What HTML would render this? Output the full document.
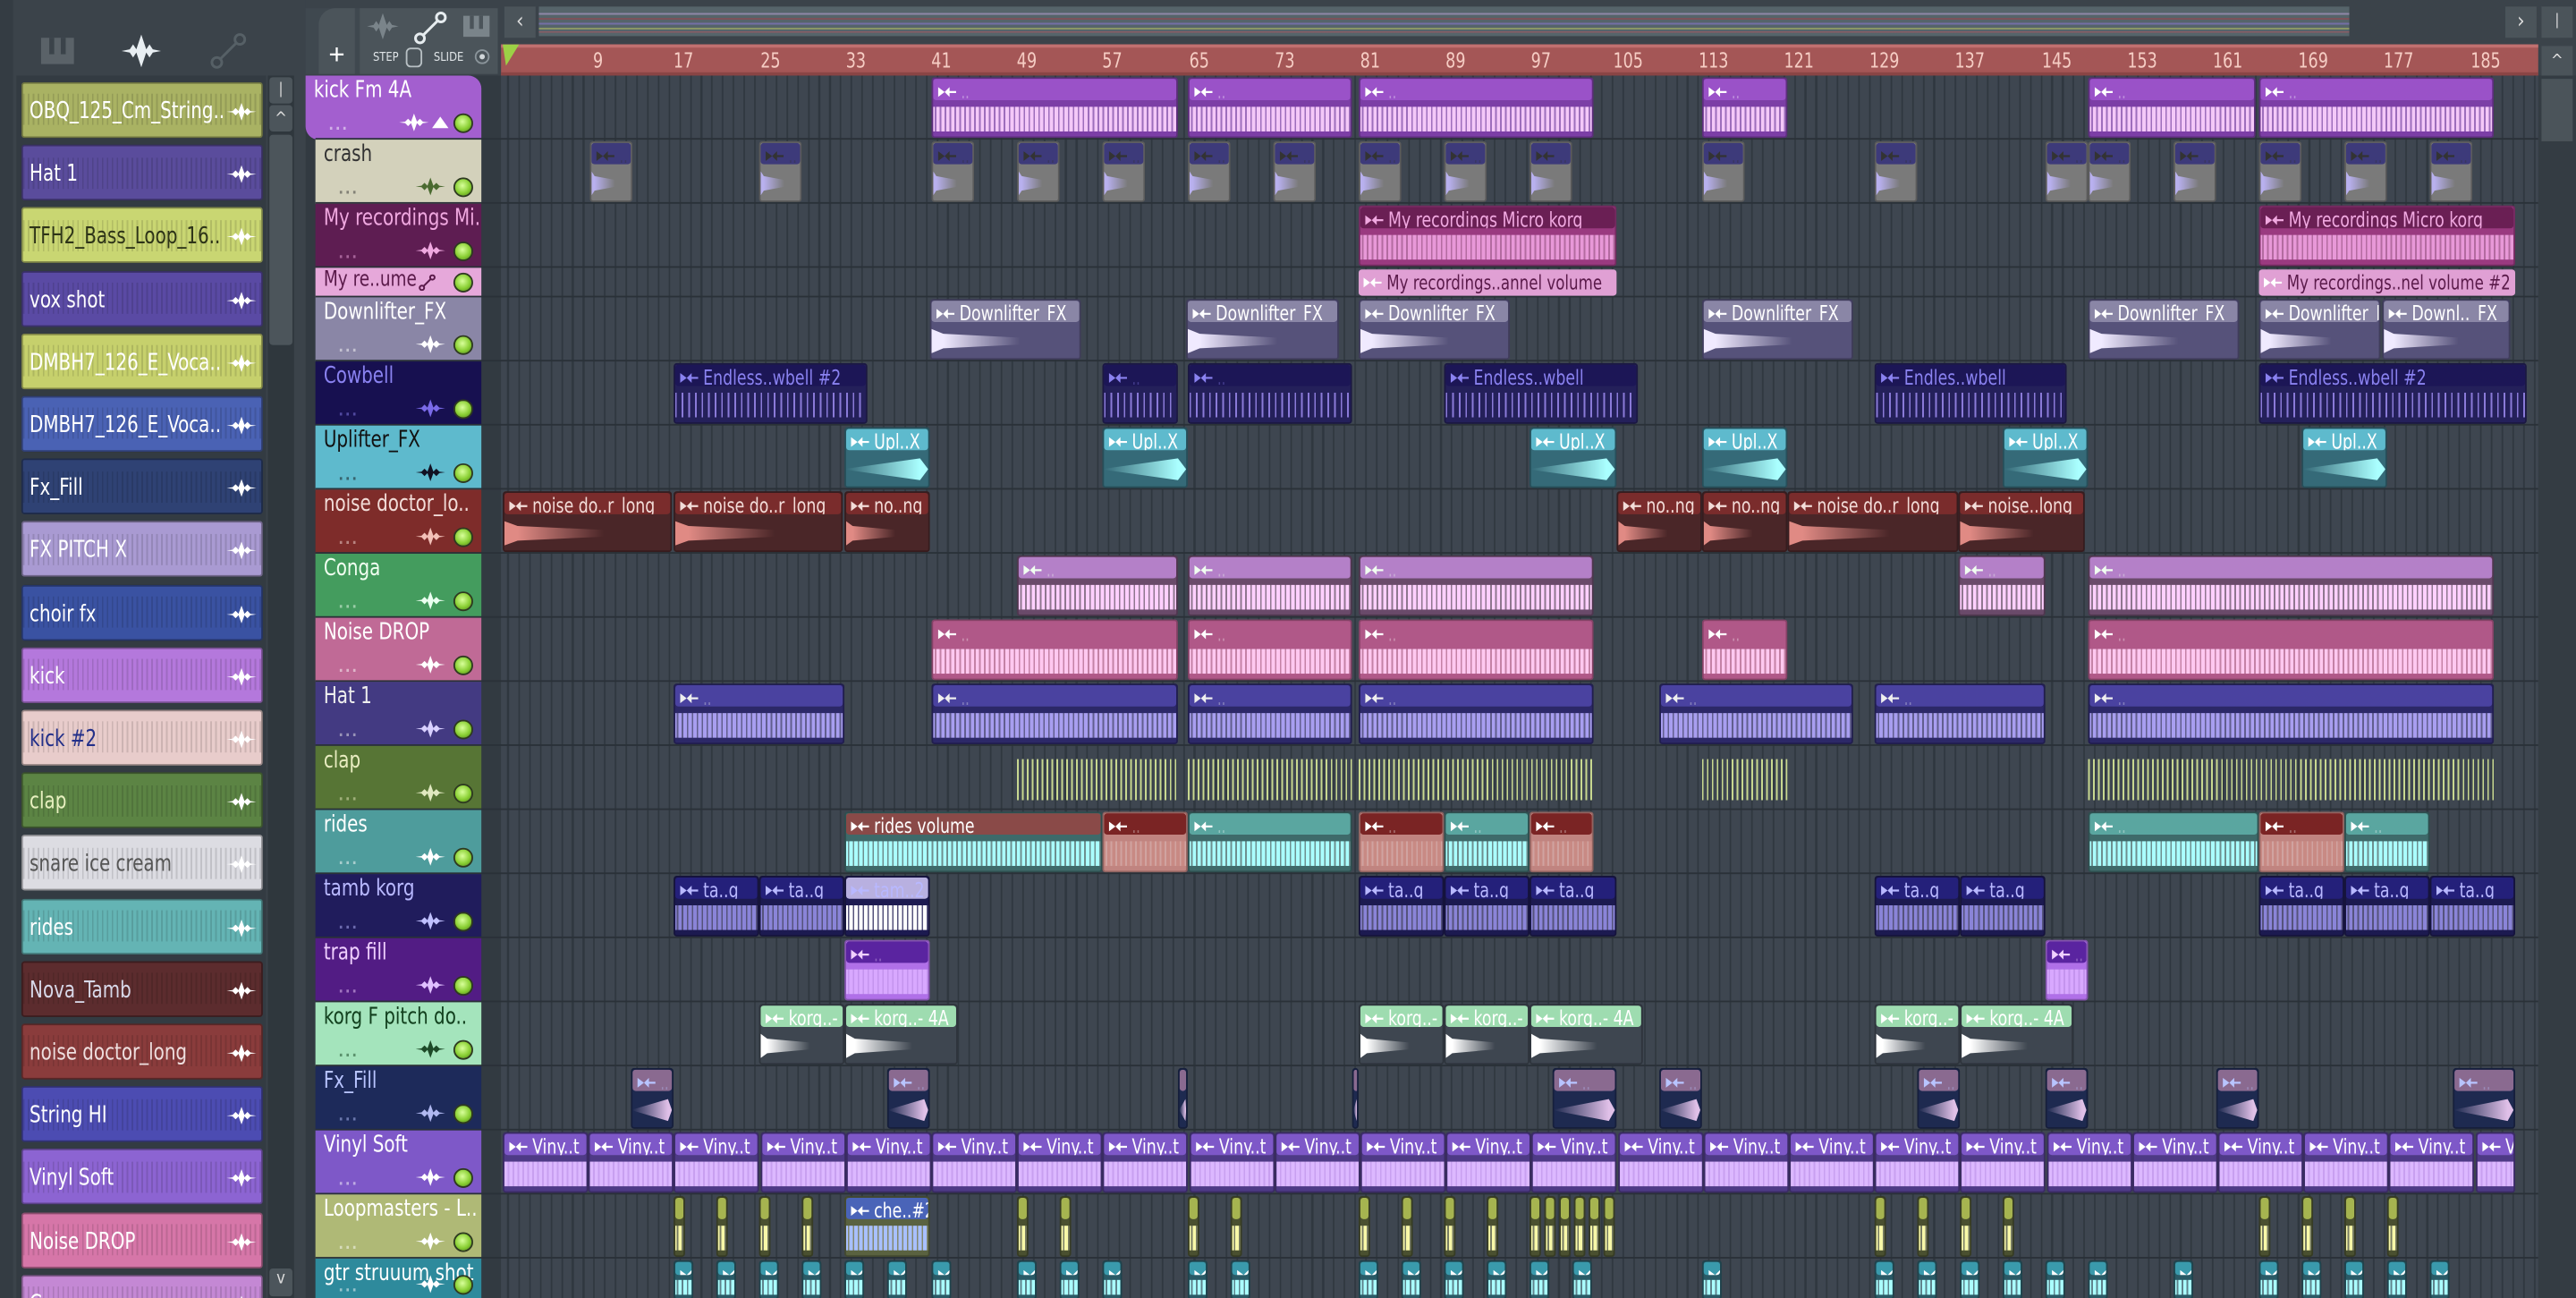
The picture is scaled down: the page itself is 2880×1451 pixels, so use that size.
<!DOCTYPE html>
<html><head><meta charset="utf-8">
<style>
*{margin:0;padding:0;box-sizing:border-box}
html,body{width:2880px;height:1450px;overflow:hidden;background:#3b434a}
#w{position:absolute;left:0;top:0;width:1568px;height:790px;transform:scale(1.83673);transform-origin:0 0;font-family:"DejaVu Sans Condensed","Liberation Sans Narrow","Liberation Sans",sans-serif;background:#3b434a;overflow:hidden}
.a{position:absolute}
.grid{left:305px;top:46px;width:1240px;height:744px;background-color:#3e4650;background-image:repeating-linear-gradient(90deg,#2f373f 0 1px,transparent 1px 6.525px);background-position:4px 0}
.rs{position:absolute;left:192px;width:1353px;height:1px;background:#2a3138}
.hd{position:absolute;left:192px;width:101px;overflow:hidden}
.hd .n{position:absolute;left:5px;top:1px;font-size:14px;white-space:nowrap;transform:scaleX(.86);transform-origin:0 0}
.hd .d{position:absolute;left:14px;bottom:3px;font-size:9px;letter-spacing:1px;opacity:.5;font-weight:bold}
.led{position:absolute;right:5px;bottom:4px;width:12px;height:12px;border-radius:50%;background:radial-gradient(circle at 45% 40%,#d8ff9a,#8ad034 55%,#4a7a18);border:1.5px solid #2e3a20}
.wv{position:absolute;right:22px;bottom:5px;width:18px;height:11px}
.cl{position:absolute;overflow:hidden;border-radius:2px}
.cl .h{position:absolute;left:0;top:0;right:0;height:38%;border-radius:2px;font-size:12.5px;white-space:nowrap;padding-left:3px;line-height:15px;overflow:hidden}
.cl .h span{display:inline-block;transform:scaleX(.84);transform-origin:0 0}
.cl .b{position:absolute;left:0;right:0;top:38%;bottom:0}
.cl .b i{position:absolute;left:0;right:0;top:18%;bottom:14%}
.li{position:absolute;left:13px;width:147px;height:34px;border-radius:2px;font-size:14px;line-height:34px;padding-left:4px;white-space:nowrap;overflow:hidden;border:1px solid rgba(0,0,0,.35)}
.li b{font-weight:normal;display:inline-block;transform:scaleX(.86);transform-origin:0 0}
.li .s{position:absolute;right:3px;top:11px;width:18px;height:12px}
.num{position:absolute;top:29px;font-size:12.5px;color:#f6cdc4;transform:translateX(-50%) scaleX(.85)}
</style></head><body><div id="w">
<div class="a" style="left:0;top:0;width:186px;height:790px;background:#3b434a"></div>
<div class="a" style="left:0;top:0;width:8px;height:790px;background:#343c43"></div>
<div class="a" style="left:10px;top:46px;width:152px;height:744px;background:#333b42"></div>
<div class="a" style="left:163px;top:46px;width:16px;height:744px;background:#2f373d"></div>
<div class="a" style="left:164px;top:47px;width:14px;height:16px;background:#4c555b;border-radius:2px;color:#ddd;font-size:9px;text-align:center;line-height:16px">|</div>
<div class="a" style="left:164px;top:64px;width:14px;height:16px;background:#4c555b;border-radius:2px;color:#ddd;font-size:10px;text-align:center;line-height:18px">^</div>
<div class="a" style="left:164px;top:82px;width:14px;height:128px;background:#4c555b;border-radius:2px"></div>
<div class="a" style="left:164px;top:772px;width:14px;height:17px;background:#4c555b;border-radius:2px;color:#ddd;font-size:10px;text-align:center;line-height:14px">v</div>
<svg class="a" style="left:24px;top:21px" width="22" height="20" viewBox="0 0 22 20"><rect x="1" y="2" width="20" height="16" fill="#5a6268"/><rect x="6" y="2" width="3" height="10" fill="#3b434a"/><rect x="13" y="2" width="3" height="10" fill="#3b434a"/></svg>
<svg class="a" style="left:74px;top:21px" width="24" height="20" viewBox="0 0 24 20"><path d="M0 10 L5 9 L7 6 L9 9 L12 0 L15 9 L17 6 L19 9 L24 10 L19 11 L17 14 L15 11 L12 20 L9 11 L7 14 L5 11Z" fill="#e8eef2"/></svg>
<svg class="a" style="left:128px;top:20px" width="22" height="22" viewBox="0 0 22 22"><circle cx="4" cy="18" r="3" fill="none" stroke="#566066" stroke-width="1.6"/><circle cx="18" cy="4" r="3" fill="none" stroke="#566066" stroke-width="1.6"/><line x1="6" y1="16" x2="16" y2="6" stroke="#566066" stroke-width="1.6"/></svg>
<div id="lp"></div>
<div class="a" style="left:186px;top:5px;width:117px;height:40px;background:#3f484f"></div>
<div class="a" style="left:194px;top:5px;width:22px;height:40px;background:#4b545a;border-radius:10px 0 0 0;color:#fff;font-size:17px;text-align:center;line-height:58px;font-family:'Liberation Sans',sans-serif">+</div>
<div class="a" style="left:219px;top:5px;width:84px;height:40px;background:#4b545a"></div>
<svg class="a" style="left:221px;top:8px" width="24" height="16" viewBox="0 0 24 20"><path d="M0 10 L5 9 L7 6 L9 9 L12 0 L15 9 L17 6 L19 9 L24 10 L19 11 L17 14 L15 11 L12 20 L9 11 L7 14 L5 11Z" fill="#7a848a"/></svg>
<svg class="a" style="left:252px;top:7px" width="20" height="20" viewBox="0 0 22 22"><circle cx="4" cy="18" r="3" fill="none" stroke="#e6ecef" stroke-width="1.8"/><circle cx="18" cy="4" r="3" fill="none" stroke="#e6ecef" stroke-width="1.8"/><line x1="6" y1="16" x2="16" y2="6" stroke="#e6ecef" stroke-width="1.8"/></svg>
<svg class="a" style="left:281px;top:8px" width="18" height="16" viewBox="0 0 22 20"><rect x="1" y="2" width="20" height="16" fill="#7a848a"/><rect x="6" y="2" width="3" height="10" fill="#4b545a"/><rect x="13" y="2" width="3" height="10" fill="#4b545a"/></svg>
<div class="a" style="left:227px;top:31px;font-size:7px;color:#dfe4e7">STEP</div>
<div class="a" style="left:247px;top:29px;width:10px;height:12px;border:1.2px solid #b8c0c4;border-radius:3px"></div>
<div class="a" style="left:264px;top:31px;font-size:7px;color:#dfe4e7">SLIDE</div>
<div class="a" style="left:289px;top:30px;width:9px;height:9px;border:1px solid #8a949a;border-radius:50%;background:radial-gradient(#d0d6d9 30%,#4b545a 35%)"></div>
<div class="a" style="left:307px;top:4px;width:19px;height:19px;background:#4b545a;color:#ddd;font-size:13px;text-align:center;line-height:19px">‹</div>
<div class="a" style="left:328px;top:4px;width:1102px;height:18px;background:#56646a;background-image:linear-gradient(180deg,transparent 4px,rgba(200,170,230,.5) 4px 5px,transparent 5px 7px,rgba(170,60,70,.45) 7px 8px,transparent 8px 10px,rgba(140,120,216,.55) 10px 11px,transparent 11px 13px,rgba(216,224,96,.4) 13px 14px,transparent 14px 15px,rgba(232,80,96,.35) 15px 16px,transparent 16px)"></div>
<div class="a" style="left:1525px;top:4px;width:19px;height:19px;background:#4b545a;color:#ddd;font-size:13px;text-align:center;line-height:19px">›</div>
<div class="a" style="left:1547px;top:4px;width:19px;height:19px;background:#4b545a;color:#ddd;font-size:9px;text-align:center;line-height:19px">|</div>
<div class="a" style="left:305px;top:27px;width:1240px;height:19px;background:#a45656;border-top:2px solid #c07070;border-bottom:2px solid #8a4545"></div>
<svg class="a" style="left:305px;top:27px" width="12" height="14" viewBox="0 0 12 14"><path d="M1 0 L11 0 L3 13 Z" fill="#9cd046"/></svg>
<div id="nums"></div>
<div class="a" style="left:1547px;top:28px;width:19px;height:18px;background:#4b545a;color:#ddd;font-size:10px;text-align:center;line-height:20px">^</div>
<div class="a" style="left:1545px;top:46px;width:23px;height:744px;background:#343c43"></div>
<div class="a" style="left:1547px;top:48px;width:19px;height:38px;background:#4b545a"></div>
<div class="a" style="left:186px;top:46px;width:119px;height:744px;background:#323a41"></div>
<div class="a grid"></div>
<div id="tr"></div>
</div>
<script>
const W='M0 6 L4 5.5 L6 3.5 L8 5.5 L10 0 L12 5.5 L14 3.5 L16 5.5 L20 6 L16 6.5 L14 8.5 L12 6.5 L10 12 L8 6.5 L6 8.5 L4 6.5Z';
function wav(c,cls,st){return `<svg class="${cls}" style="${st||''}" viewBox="0 0 20 12"><path d="${W}" fill="${c}"/></svg>`;}
const L=[["OBQ_125_Cm_String..","#a9b263","#fff"],["Hat 1","#5a4c9c","#fff"],["TFH2_Bass_Loop_16..","#c9d672","#2e3418"],["vox shot","#5a4aa4","#fff"],["DMBH7_126_E_Voca..","#c6d06c","#fff"],["DMBH7_126_E_Voca..","#4a62b4","#fff"],["Fx_Fill","#2f4274","#fff"],["FX PITCH X","#a99ad2","#fff"],["choir fx","#3a52a2","#fff"],["kick","#b478dc","#fff"],["kick  #2","#e8cccb","#23308a"],["clap","#5c8444","#e8f0c0"],["snare ice cream","#dcdce2","#555"],["rides","#64b4b4","#fff"],["Nova_Tamb","#5c2c2e","#d8d8e8"],["noise doctor_long","#8a3c3c","#eedede"],["String HI","#4c4cb2","#fff"],["Vinyl Soft","#8c64d2","#fff"],["Noise DROP","#d676a8","#fff"],["Conga","#c488d4","#fff"]];
let h='';
L.forEach((it,i)=>{const y=50+i*38.2;h+=`<div class="li" style="top:${y}px;background:${it[1]};color:${it[2]};background-image:repeating-linear-gradient(90deg,rgba(0,0,0,.12) 0 1px,transparent 1px 3px);background-size:100% 60%;background-repeat:no-repeat;background-position:0 50%"><b>${it[0]}</b>${wav('#fff','s')}</div>`});
document.getElementById('lp').innerHTML=h;
h='';for(let b=9;b<=185;b+=8){h+=`<div class="num" style="left:${309+(b-1)*6.525+3}px">${b}</div>`}
document.getElementById('nums').innerHTML=h;
const T=[46,85,124,163,181,220,259,298,337,376,415,454,493,532,571,610,649,688,727,766,792];
const R=[
["kick Fm 4A","#a35fcf","#fff","#fff","#9a52c8","#7c3ea6","#f4c8f8",[[567,717],[723,823],[827,970],[1036,1088],[1271,1373],[1375,1518]],""],
["crash","#d3d1bb","#333","#4a6a30","#3d3a7a","#7a7a7a","#b8b0ee",[359,462,567,619,671,723,775,827,879,931,1036,1141,1245,1271,1323,1375,1427,1479].map(x=>[x,x+26]),"..","fade"],
["My recordings Mi..","#5e1d52","#f0a8e0","#f0a8e0","#6a1f54","#9a3a80","#e898d8",[[827,984,"My recordings Micro korg"],[1375,1531,"My recordings Micro korg"]],""],
["My re..ume","#e6a8da","#5a1a4a","#fff","#e0a0d4","#e0a0d4","#e0a0d4",[[827,984,"My recordings..annel volume"],[1375,1531,"My recordings..nel volume #2"]],"","thin"],
["Downlifter_FX","#8a86a6","#fff","#fff","#8a86a6","#56527a","#f0eaff",[[566,658,"Downlifter_FX"],[722,815,"Downlifter_FX"],[827,919,"Downlifter_FX"],[1036,1128,"Downlifter_FX"],[1271,1363,"Downlifter_FX"],[1375,1449,"Downlifter_FX"],[1450,1528,"Downl.._FX"]],"","fade"],
["Cowbell","#171050","#8a82f0","#7a6ae8","#1c1656","#24205a","#8a7ad8",[[410,528,"Endless..wbell  #2"],[671,717],[723,823],[879,997,"Endless..wbell"],[1141,1258,"Endles..wbell"],[1375,1538,"Endless..wbell  #2"]],"","tick"],
["Uplifter_FX","#5ebacd","#111","#112","#5ebacd","#356a78","#aaffff",[[514,566,"Upl..X"],[671,723,"Upl..X"],[931,984,"Upl..X"],[1036,1088,"Upl..X"],[1219,1271,"Upl..X"],[1401,1453,"Upl..X"]],"","rise"],
["noise doctor_lo..","#7e2c2a","#f2dcd8","#f2c0b8","#7a2c2c","#4a2628","#e08a84",[[306,409,"noise do..r_long"],[410,513,"noise do..r_long"],[514,566,"no..ng"],[984,1036,"no..ng"],[1036,1088,"no..ng"],[1088,1192,"noise do..r_long"],[1192,1269,"noise..long"]],"","fade"],
["Conga","#449c5e","#f0fff0","#eafff0","#b480c8","#6a4a6a","#ffd0ff",[[619,717],[723,823],[827,970],[1192,1245],[1271,1518]],".."],
["Noise DROP","#c06a96","#fff","#fff","#b05888","#b05888","#ffc8f0",[[567,717],[723,823],[827,970],[1036,1088],[1271,1518]],""],
["Hat 1","#433a82","#eee","#d8d0ff","#4a42a0","#2c2868","#a89ef0",[[410,514],[567,717],[723,823],[827,970],[1010,1128],[1141,1245],[1271,1518]],".."],
["clap","#577535","#e8ecc0","#e0e8c0","transparent","transparent","#c8d890",[[619,717],[723,823],[827,970],[1036,1088],[1271,1518]],"","lines"],
["rides","#4e9c9c","#fff","#fff","#5aa6a0","#3e6a6a","#aaffff",[[514,671,"rides volume"],[671,723],[723,823],[827,879],[879,931],[931,970],[1271,1375],[1375,1427],[1427,1479]],".."],
["tamb korg","#201c5c","#b8b8ff","#c0c0ff","#24207a","#1c1a50","#8a84d8",[[410,462,"ta..g"],[462,514,"ta..g"],[514,566,"tam..2"],[827,879,"ta..g"],[879,931,"ta..g"],[931,984,"ta..g"],[1141,1193,"ta..g"],[1193,1245,"ta..g"],[1375,1427,"ta..g"],[1427,1479,"ta..g"],[1479,1531,"ta..g"]],""],
["trap fill","#521c84","#f0d0ff","#e0c0ff","#5a24a0","#b070e8","#d8a8ff",[[514,566],[1245,1271]],""],
["korg F pitch do..","#a4e4bc","#12401e","#1e4a28","#9edcb0","#3e4650","#ffffff",[[462,514,"korg..-"],[514,583,"korg..- 4A"],[827,879,"korg..-"],[879,931,"korg..-"],[931,1000,"korg..- 4A"],[1141,1193,"korg..-"],[1193,1262,"korg..- 4A"]],"","fade"],
["Fx_Fill","#1d2a5a","#b8c4ff","#b0b8f0","#8a6a90","#1e2a50","#e0c0e8",[[384,410],[540,566],[717,723],[823,827],[945,984],[1010,1036],[1167,1193],[1245,1271],[1349,1375],[1493,1531]],"..","rise"],
["Vinyl Soft","#7e58c8","#fff","#fff","#7e58c8","#4e3a86","#dcb8ff",[],"","vinyl"],
["Loopmasters - L..","#afb976","#fff","#fff","#a6b450","#4a5030","#f8f8a8",[],""],
["gtr struuum shot","#2e8a9c","#fff","#fff","#3a9aac","#2a5a66","#aaffff",[],""]
];
for(let x=306;x<1531;x+=52.2){R[17][7].push([x,Math.min(x+52,1531),"Viny..t"])}
[410,436,462,488,619,645,723,749,827,853,879,905,931,940,949,958,967,976,1141,1167,1193,1219,1375,1401,1427,1453].forEach(x=>R[18][7].push([x,x+7]));
R[18][7].push([514,566,"che..#2"]);
[410,436,462,488,514,540,567,619,645,671,723,749,827,853,879,905,931,957,1036,1141,1167,1193,1219,1245,1271,1323,1375,1401,1427,1453,1479].forEach(x=>R[19][7].push([x,x+12]));
const ARR='<svg width="11" height="8" viewBox="0 0 11 8" style="margin-right:3px"><path d="M0 1 L0 7 L4 4Z M4 4 L7 1 L7 7Z M6 3.4 L11 3.4 L11 4.6 L6 4.6Z" fill="currentColor"/></svg>';
h='';
R.forEach((r,i)=>{
 const y=T[i],hh=T[i+1]-y;
 const thin=r[9]==='thin';
 const hx=i===0?186:192, hw=i===0?107:101;
 h+=`<div class="hd" style="left:${hx}px;width:${hw}px;top:${y}px;height:${hh}px;background:${r[1]};color:${r[2]};${i===0?'border-radius:0 8px 0 8px;':''}"><div class="n" style="${thin?'top:0;font-size:13px':''}">${r[0]}</div>`;
 if(!thin){h+=`<div class="d">...</div>${wav(r[3],'wv',i===0?'right:32px':'')}`; if(i===0)h+=`<div class="a" style="right:20px;bottom:7px;width:0;height:0;border-left:5px solid transparent;border-right:5px solid transparent;border-bottom:7px solid #fff"></div>`;}
 else{h+=`<svg class="a" style="left:62px;top:4px" width="12" height="10" viewBox="0 0 22 22"><circle cx="4" cy="18" r="3" fill="none" stroke="#5a1a4a" stroke-width="2.4"/><circle cx="18" cy="4" r="3" fill="none" stroke="#5a1a4a" stroke-width="2.4"/><line x1="6" y1="16" x2="16" y2="6" stroke="#5a1a4a" stroke-width="2.4"/></svg>`}
 h+=`<div class="led" style="${thin?'bottom:3px':''}"></div></div>`;
 h+=`<div class="rs" style="top:${y+hh-1}px"></div>`;
 r[7].forEach(c=>{
  const x1=c[0],x2=c[1],w=x2-x1;let lab=c[2]||'';
  let hc=r[4],bc=r[5],wc=r[6];
  if(i===12){ if(c[2]){hc='#8a4a48';bc='#3e6a6a'} else if([671,827,931,1375].includes(x1)){hc='#7a2424';bc='#c08480';wc='#c88a84'} }
  if(i===18&&c[2]){hc='#4a64b8';bc='#5a6240';wc='#a8c0ff'}
  if(i===13&&c[2]==='tam..2'){hc='#b8b0e0';bc='#1c1a50';wc='#ffffff'}
  if(thin){h+=`<div class="cl" style="left:${x1}px;top:${y+1}px;width:${w}px;height:${hh-2}px;background:${hc};color:#5a1a4a;font-size:12px;line-height:${hh-2}px;padding-left:3px;white-space:nowrap">${ARR.replace('currentColor','#fff')}<span style="display:inline-block;transform:scaleX(.84);transform-origin:0 0">${lab}</span></div>`;return}
  let wavebg;
  const st=r[9];
  if(st==='fade')wavebg=`linear-gradient(90deg,${wc} 0,${wc} 8%,transparent 60%)`;
  else if(st==='rise')wavebg=`linear-gradient(90deg,transparent 0,${wc} 90%)`;
  else if(st==='tick')wavebg=`repeating-linear-gradient(90deg,${wc} 0 1px,transparent 1px 4px)`;
  else if(st==='lines')wavebg=`repeating-linear-gradient(90deg,${wc} 0 1px,transparent 1px 3px)`;
  else if(st==='vinyl')wavebg=`repeating-linear-gradient(90deg,${wc} 0 2px,#c8a0f0 2px 3px)`;
  else wavebg=`repeating-linear-gradient(90deg,${wc} 0 1px,rgba(255,255,255,.25) 1px 2px,${wc} 2px 3px)`;
  const clip=st==='fade'?'clip-path:polygon(0 0,8% 20%,100% 48%,100% 52%,8% 80%,0 100%)':(st==='rise'?'clip-path:polygon(0 48%,90% 5%,100% 50%,90% 95%,0 52%)':'');
  const showLab=w>20;
  h+=`<div class="cl" style="left:${x1}px;top:${y+1}px;width:${w}px;height:${hh-2}px;background:${bc};${bc==='transparent'?'':'border:1px solid rgba(0,0,0,.25)'}">`;
  if(hc!=='transparent')h+=`<div class="h" style="background:${hc};color:${(r[2]==='#111'||i===15)?'#fff':r[2]}">${w>9?ARR:''}${showLab?'<span>'+(lab||'<span style="opacity:.35">..</span>')+'</span>':''}</div>`;
  h+=`<div class="b" style="${hc==='transparent'?'top:0':''}"><i style="background:${wavebg};${clip}"></i></div></div>`;
 });
});
document.getElementById('tr').innerHTML=h;
</script>
</body></html>
